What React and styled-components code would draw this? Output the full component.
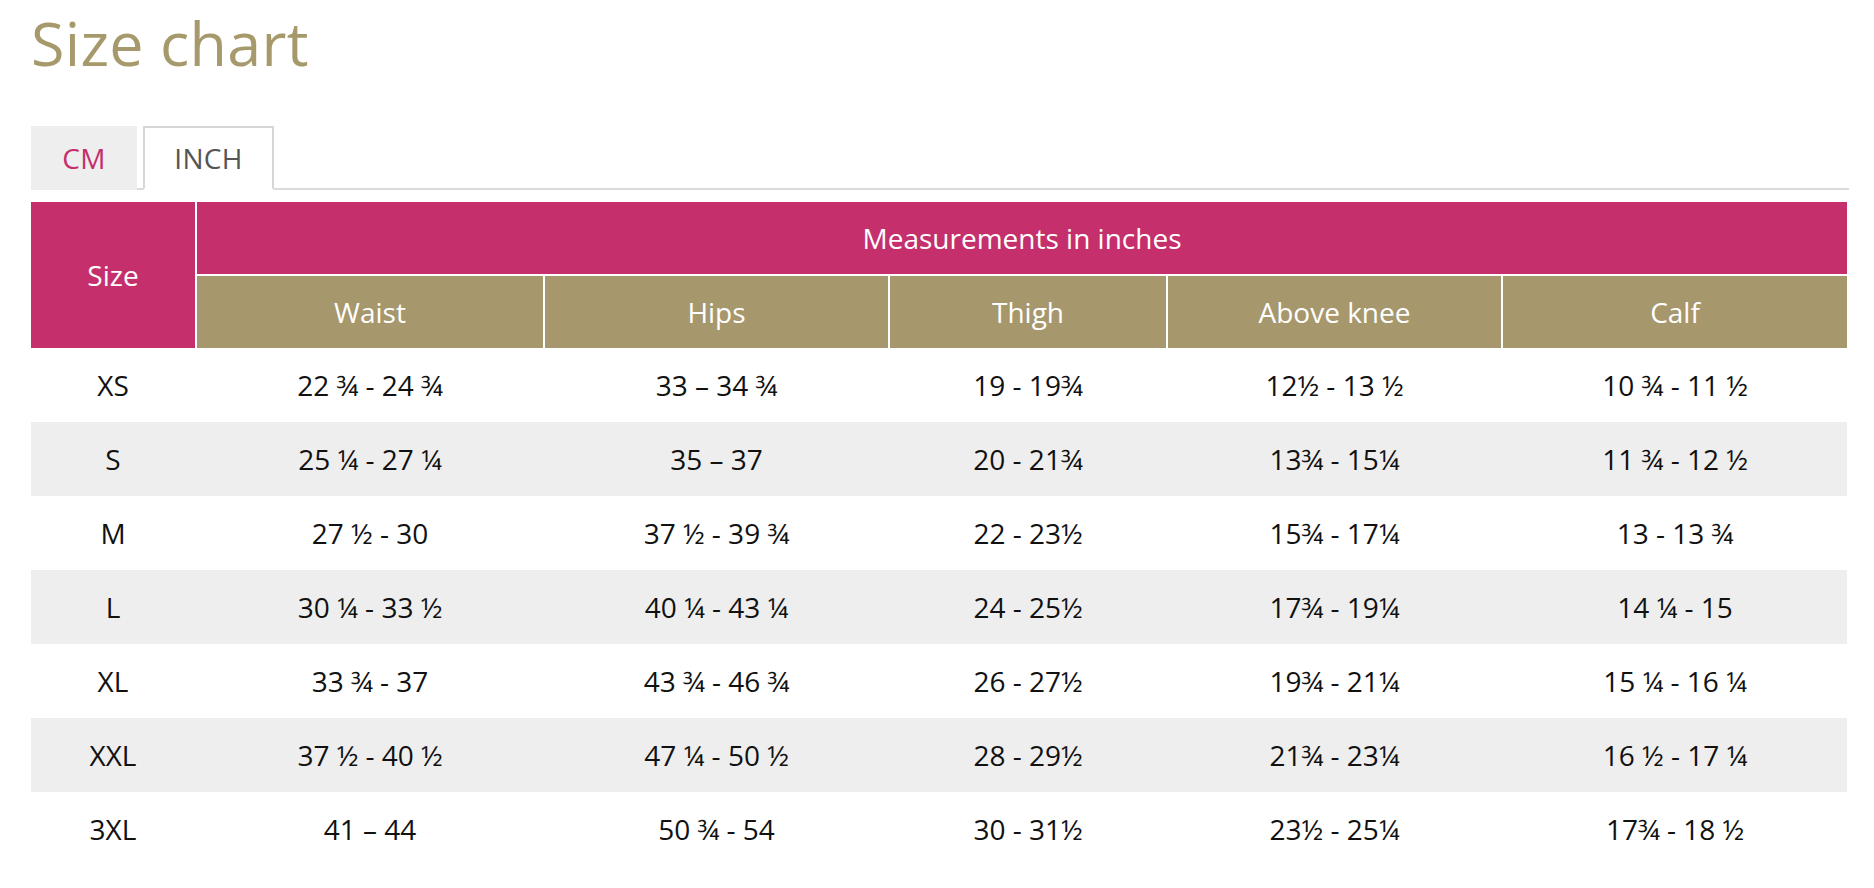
import React from "react";
import styled, { createGlobalStyle } from "styled-components";

const GlobalStyle = createGlobalStyle`
  html, body { margin: 0; padding: 0; background: #fff; }
  body { font-family: "Open Sans", "Lato", sans-serif; color: #111; }
`;

const COLS = "164px 346px 343px 276px 333px 344px";

const Page = styled.div`
  padding: 0 25px 0 31px;
  width: 1818px;
`;

const Title = styled.h1`
  margin: 0;
  padding-top: 3px;
  font-size: 61px;
  line-height: 80px;
  font-weight: 400;
  color: #a69a6c;
  letter-spacing: 0.3px;
`;

const TabBar = styled.div`
  display: flex;
  align-items: flex-end;
  gap: 6px;
  margin-top: 43px;
  border-bottom: 2px solid #dadada;
  height: 62px;
`;

const Tab = styled.div`
  box-sizing: border-box;
  height: 64px;
  width: ${(p) => p.$w}px;
  display: flex;
  align-items: center;
  justify-content: center;
  font-size: 28px;
  letter-spacing: 0.3px;
  margin-bottom: -2px;
  background: ${(p) => (p.$active ? "#fff" : "#eeeeee")};
  color: ${(p) => (p.$active ? "#555" : "#c42f6c")};
  border: ${(p) => (p.$active ? "2px solid #d6d6d6" : "none")};
  border-bottom: ${(p) => (p.$active ? "2px solid #fff" : "none")};
`;

const Table = styled.div`
  margin-top: 12px;
  width: 1816px;
`;

const Head = styled.div`
  display: grid;
  grid-template-columns: ${COLS};
  grid-template-rows: 72px 72px;
  gap: 2px;
`;

const HeadCell = styled.div`
  display: flex;
  align-items: center;
  justify-content: center;
  color: #fff;
  font-size: 28px;
  font-weight: 400;
  background: ${(p) => (p.$pink ? "#c42f6c" : "#a6976d")};
  grid-row: ${(p) => p.$row || "auto"};
  grid-column: ${(p) => p.$col || "auto"};
`;

const Row = styled.div`
  display: grid;
  grid-template-columns: ${COLS};
  column-gap: 2px;
  height: 74px;
  background: ${(p) => (p.$alt ? "#eeeeee" : "#fff")};
`;

const Cell = styled.div`
  display: flex;
  align-items: center;
  justify-content: center;
  font-size: 28px;
  color: #111;
`;

const rows = [
  ["XS", "22 ¾ - 24 ¾", "33 – 34 ¾", "19 - 19¾", "12½ - 13 ½", "10 ¾ - 11 ½"],
  ["S", "25 ¼ - 27 ¼", "35 – 37", "20 - 21¾", "13¾ - 15¼", "11 ¾ - 12 ½"],
  ["M", "27 ½ - 30", "37 ½ - 39 ¾", "22 - 23½", "15¾ - 17¼", "13 - 13 ¾"],
  ["L", "30 ¼ - 33 ½", "40 ¼ - 43 ¼", "24 - 25½", "17¾ - 19¼", "14 ¼ - 15"],
  ["XL", "33 ¾ - 37", "43 ¾ - 46 ¾", "26 - 27½", "19¾ - 21¼", "15 ¼ - 16 ¼"],
  ["XXL", "37 ½ - 40 ½", "47 ¼ - 50 ½", "28 - 29½", "21¾ - 23¼", "16 ½ - 17 ¼"],
  ["3XL", "41 – 44", "50 ¾ - 54", "30 - 31½", "23½ - 25¼", "17¾ - 18 ½"],
];

export default function App() {
  return (
    <Page>
      <GlobalStyle />
      <Title>Size chart</Title>
      <TabBar>
        <Tab $w={106}>CM</Tab>
        <Tab $w={131} $active>INCH</Tab>
      </TabBar>
      <Table>
        <Head>
          <HeadCell $pink $row="1 / span 2" $col="1">Size</HeadCell>
          <HeadCell $pink $row="1" $col="2 / span 5">Measurements in inches</HeadCell>
          <HeadCell $row="2" $col="2">Waist</HeadCell>
          <HeadCell $row="2" $col="3">Hips</HeadCell>
          <HeadCell $row="2" $col="4">Thigh</HeadCell>
          <HeadCell $row="2" $col="5">Above knee</HeadCell>
          <HeadCell $row="2" $col="6">Calf</HeadCell>
        </Head>
        {rows.map((r, i) => (
          <Row key={r[0]} $alt={i % 2 === 1}>
            {r.map((c, j) => (
              <Cell key={j}>{c}</Cell>
            ))}
          </Row>
        ))}
      </Table>
    </Page>
  );
}
